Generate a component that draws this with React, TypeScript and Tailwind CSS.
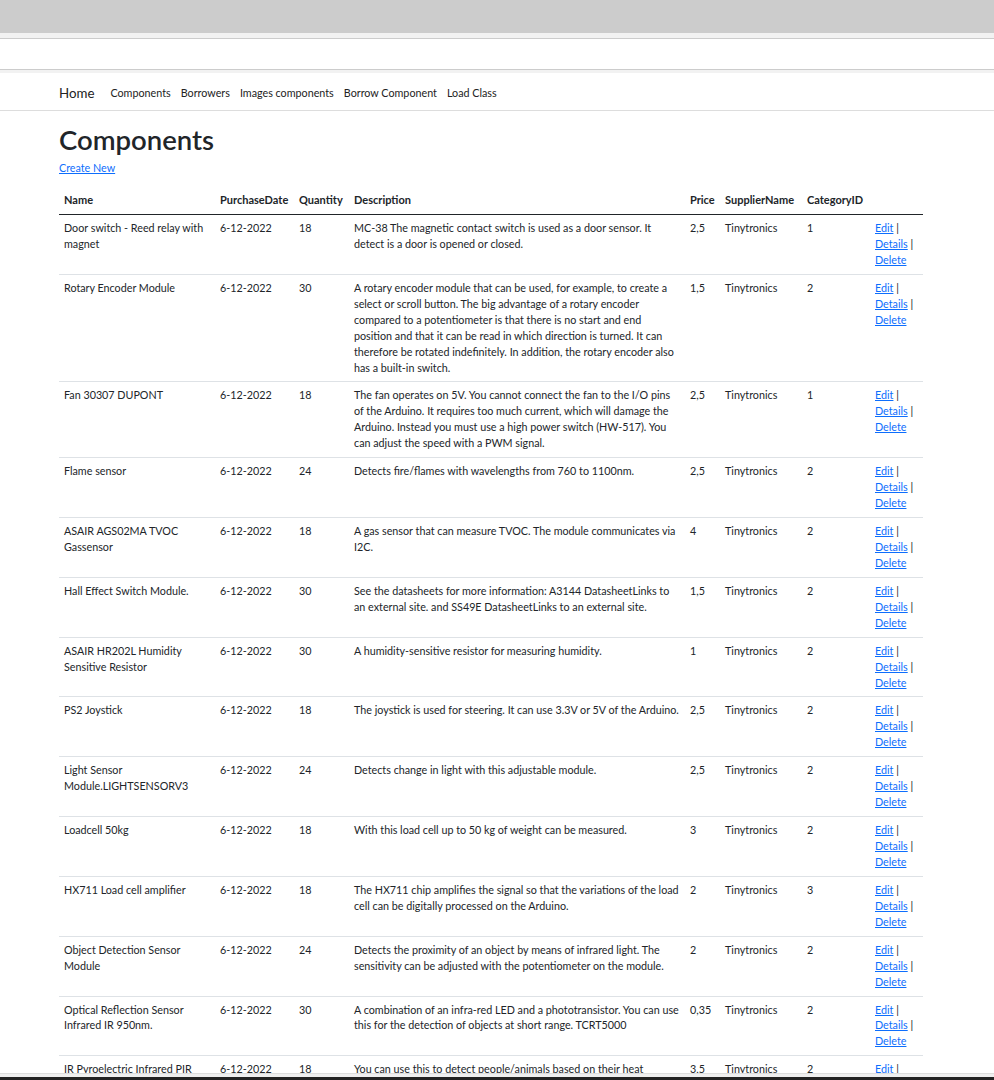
import React from "react";

type Row = {
  name: string;
  date: string;
  qty: string;
  desc: string;
  price: string;
  cat: string;
};

const rows: Row[] = [
  { name: "Door switch - Reed relay with magnet", date: "6-12-2022", qty: "18", desc: "MC-38 The magnetic contact switch is used as a door sensor. It detect is a door is opened or closed.", price: "2,5", cat: "1" },
  { name: "Rotary Encoder Module", date: "6-12-2022", qty: "30", desc: "A rotary encoder module that can be used, for example, to create a select or scroll button. The big advantage of a rotary encoder compared to a potentiometer is that there is no start and end position and that it can be read in which direction is turned. It can therefore be rotated indefinitely. In addition, the rotary encoder also has a built-in switch.", price: "1,5", cat: "2" },
  { name: "Fan 30307 DUPONT", date: "6-12-2022", qty: "18", desc: "The fan operates on 5V. You cannot connect the fan to the I/O pins of the Arduino. It requires too much current, which will damage the Arduino. Instead you must use a high power switch (HW-517). You can adjust the speed with a PWM signal.", price: "2,5", cat: "1" },
  { name: "Flame sensor", date: "6-12-2022", qty: "24", desc: "Detects fire/flames with wavelengths from 760 to 1100nm.", price: "2,5", cat: "2" },
  { name: "ASAIR AGS02MA TVOC Gassensor", date: "6-12-2022", qty: "18", desc: "A gas sensor that can measure TVOC. The module communicates via I2C.", price: "4", cat: "2" },
  { name: "Hall Effect Switch Module.", date: "6-12-2022", qty: "30", desc: "See the datasheets for more information: A3144 DatasheetLinks to an external site. and SS49E DatasheetLinks to an external site.", price: "1,5", cat: "2" },
  { name: "ASAIR HR202L Humidity Sensitive Resistor", date: "6-12-2022", qty: "30", desc: "A humidity-sensitive resistor for measuring humidity.", price: "1", cat: "2" },
  { name: "PS2 Joystick", date: "6-12-2022", qty: "18", desc: "The joystick is used for steering. It can use 3.3V or 5V of the Arduino.", price: "2,5", cat: "2" },
  { name: "Light Sensor Module.LIGHTSENSORV3", date: "6-12-2022", qty: "24", desc: "Detects change in light with this adjustable module.", price: "2,5", cat: "2" },
  { name: "Loadcell 50kg", date: "6-12-2022", qty: "18", desc: "With this load cell up to 50 kg of weight can be measured.", price: "3", cat: "2" },
  { name: "HX711 Load cell amplifier", date: "6-12-2022", qty: "18", desc: "The HX711 chip amplifies the signal so that the variations of the load cell can be digitally processed on the Arduino.", price: "2", cat: "3" },
  { name: "Object Detection Sensor Module", date: "6-12-2022", qty: "24", desc: "Detects the proximity of an object by means of infrared light. The sensitivity can be adjusted with the potentiometer on the module.", price: "2", cat: "2" },
  { name: "Optical Reflection Sensor Infrared IR 950nm.", date: "6-12-2022", qty: "30", desc: "A combination of an infra-red LED and a phototransistor. You can use this for the detection of objects at short range. TCRT5000", price: "0,35", cat: "2" },
  { name: "IR Pyroelectric Infrared PIR Motion Sensor Detector Module", date: "6-12-2022", qty: "18", desc: "You can use this to detect people/animals based on their heat radiation. The sensitivity and delay time can be adjusted.", price: "3,5", cat: "2" },
];

const font = { fontFamily: 'Lato, "Open Sans", sans-serif' };

const td = "px-[5px] pt-[5px] pb-[6px]";
const th = "px-[5px] pt-[5px] pb-[6px] align-bottom";

export default function App() {
  return (
    <div className="min-h-screen bg-white text-[#212529]" style={font}>
      <div className="h-[33px] bg-[#cccccc]" />
      <div className="h-[6px] bg-[#f2f2f2] border-b border-[#cccccc]" />
      <div className="h-[30px] bg-white" />
      <div className="h-[4px] bg-[#f2f2f2] border-t border-[#cccccc]" />
      <nav className="h-[38px] border-b border-[#dddddd] flex items-center pl-[59px] pt-[4px]">
        <span className="text-[13.3px] text-[#222] mr-[11px]">Home</span>
        <div className="flex text-[10.75px] text-[#222]">
          <span className="px-[5px]">Components</span>
          <span className="px-[5px]">Borrowers</span>
          <span className="px-[5px]">Images components</span>
          <span className="px-[5px]">Borrow Component</span>
          <span className="px-[5px]">Load Class</span>
        </div>
      </nav>
      <main className="pl-[59px] pt-[13px]">
        <h1 className="text-[27.5px] font-semibold leading-[32px] text-[#212529]">Components</h1>
        <p className="mt-[4px] mb-[11px] text-[10.75px] leading-[16px]">
          <a className="text-[#0d6efd] underline">Create New</a>
        </p>
        <table className="w-[864px] table-fixed border-collapse text-[10.75px] leading-[15.93px]">
          <colgroup>
            <col className="w-[156px]" />
            <col className="w-[79px]" />
            <col className="w-[55px]" />
            <col className="w-[336px]" />
            <col className="w-[35px]" />
            <col className="w-[82px]" />
            <col className="w-[68px]" />
            <col className="w-[53px]" />
          </colgroup>
          <thead>
            <tr className="border-b border-[#212529] text-left font-bold text-[11px] leading-[16px]">
              <th className={th}>Name</th>
              <th className={th}>PurchaseDate</th>
              <th className={th}>Quantity</th>
              <th className={th}>Description</th>
              <th className={th}>Price</th>
              <th className={th + " whitespace-nowrap"}>SupplierName</th>
              <th className={th}>CategoryID</th>
              <th className={th}></th>
            </tr>
          </thead>
          <tbody>
            {rows.map((r, i) => (
              <tr key={i} className="border-b border-[#dee2e6] align-top">
                <td className={td}>{r.name}</td>
                <td className={td}>{r.date}</td>
                <td className={td}>{r.qty}</td>
                <td className={td}>{r.desc}</td>
                <td className={td}>{r.price}</td>
                <td className={td}>Tinytronics</td>
                <td className={td}>{r.cat}</td>
                <td className={td + " whitespace-nowrap"}>
                  <div><a className="text-[#0d6efd] underline">Edit</a> |</div>
                  <div><a className="text-[#0d6efd] underline">Details</a> |</div>
                  <div><a className="text-[#0d6efd] underline">Delete</a></div>
                </td>
              </tr>
            ))}
          </tbody>
        </table>
      </main>
      <div className="fixed bottom-0 left-0 right-0 h-[7px] flex flex-col">
        <div className="h-[4px] bg-[#efefef] border-t border-[#dddddd]" />
        <div className="h-[3px] bg-[#222222]" />
      </div>
    </div>
  );
}
